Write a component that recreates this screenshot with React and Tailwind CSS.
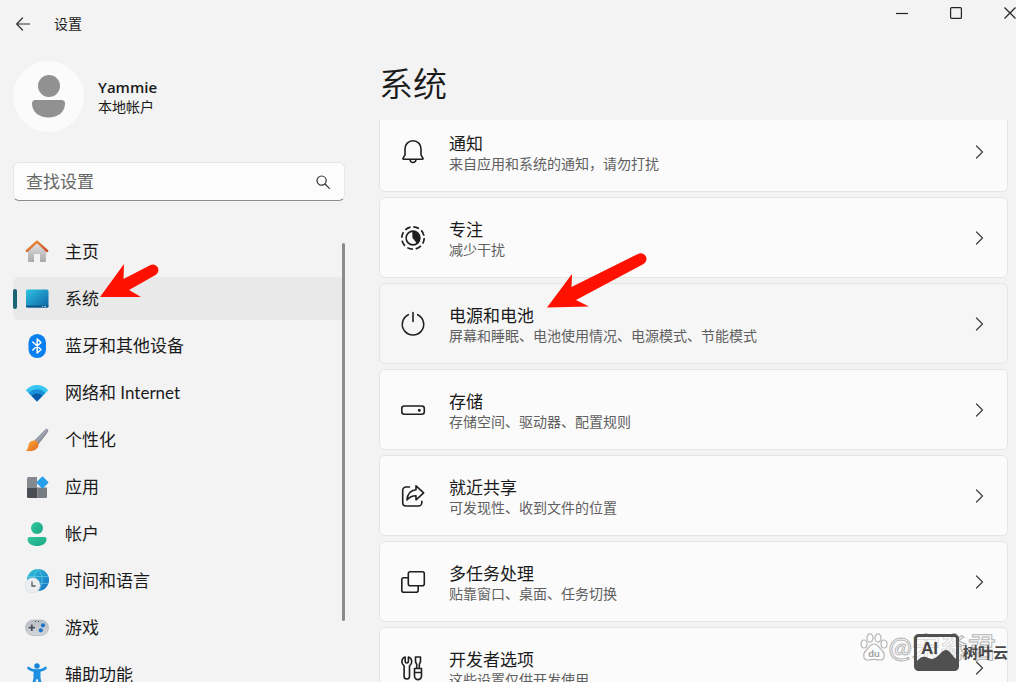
import { clsx } from "clsx";

const HomeIcon = () => (
  <svg viewBox="0 0 24 24" className="w-6 h-6">
    <defs>
      <linearGradient id="homeWall" x1="0" y1="0" x2="0" y2="1">
        <stop offset="0" stopColor="#e6e6e6" />
        <stop offset="1" stopColor="#a9a9ab" />
      </linearGradient>
      <linearGradient id="homeRoof" x1="0" y1="0" x2="1" y2="1">
        <stop offset="0" stopColor="#f0973c" />
        <stop offset="1" stopColor="#c4502a" />
      </linearGradient>
    </defs>
    <path d="M3 10.500 12 2l9 8.500V21a1 1 0 0 1-1 1h-5v-8H9v8H4a1 1 0 0 1-1-1z" fill="url(#homeWall)" />
    <path d="M1.800 11 12 1.700 22.200 11" fill="none" stroke="url(#homeRoof)" strokeWidth="2.400" strokeLinecap="round" strokeLinejoin="round" />
  </svg>
);

const SystemIcon = () => (
  <svg viewBox="0 0 24 24" className="w-6 h-6">
    <defs>
      <linearGradient id="screen" x1="0" y1="0" x2="1" y2="1">
        <stop offset="0" stopColor="#2fc3e2" />
        <stop offset="1" stopColor="#0c63a4" />
      </linearGradient>
    </defs>
    <rect x="1" y="2.500" width="22.500" height="18" rx="1.500" fill="url(#screen)" />
    <path d="M1 18.500h22.500v.5a1.500 1.500 0 0 1-1.500 1.500H2.500A1.500 1.500 0 0 1 1 19z" fill="#0b5688" />
    <path d="M17 19.500h1M19 19.500h2" stroke="#bfe6f5" strokeWidth="0.800" />
  </svg>
);

const BluetoothIcon = () => (
  <svg viewBox="0 0 24 24" className="w-6 h-6">
    <rect x="3.500" y="0" width="17.500" height="24" rx="8.700" fill="#0a7ff0" />
    <path d="M7.800 8 16 15.500 12.200 19V5L16 8.500 7.800 16" fill="none" stroke="#fff" strokeWidth="1.500" strokeLinejoin="round" strokeLinecap="round" />
  </svg>
);

const NetworkIcon = () => (
  <svg viewBox="0 0 24 24" className="w-6 h-6">
    <path d="M12 20.500.8 9.200C7 2.200 17 2.200 23.200 9.200z" fill="#35c5f0" />
    <path d="M12 20.500 3.700 12.100c4.700-5.200 11.900-5.200 16.600 0z" fill="#1990d8" />
    <path d="M12 20.500 6.700 15c3-3.200 7.600-3.200 10.600 0z" fill="#0c59a8" />
  </svg>
);

const BrushIcon = () => (
  <svg viewBox="0 0 24 24" className="w-6 h-6">
    <defs>
      <linearGradient id="bristle" x1="0" y1="0" x2="1" y2="1">
        <stop offset="0" stopColor="#fbb040" />
        <stop offset="1" stopColor="#e2661b" />
      </linearGradient>
    </defs>
    <path d="M9.500 12.500 20.500 1.200c1.200-1.200 3.300 0 2.700 1.700-.3 1-.6 1.500-1.200 2.300L13 17z" fill="#8b929d" />
    <path d="M11 14 22.300 1.500" stroke="#b5bac2" strokeWidth="1" />
    <path d="M9 12.500c2.500 0 4.700 2.200 4.500 4.700C13 21.500 7 24.500.8 22.500c2.200-1.300 2.200-3 2.700-5.500.5-2.800 2.700-4.500 5.500-4.500z" fill="url(#bristle)" />
  </svg>
);

const AppsIcon = () => (
  <svg viewBox="0 0 24 24" className="w-6 h-6">
    <path d="M3.500 2H12v10.500H2V3.500A1.500 1.500 0 0 1 3.500 2z" fill="#858a90" />
    <path d="M2 12.500h10.500V23h-9A1.500 1.500 0 0 1 2 21.500z" fill="#4a4e54" />
    <path d="M12.500 12.500H22v9a1.500 1.500 0 0 1-1.500 1.500h-8z" fill="#777c83" />
    <rect x="13" y="3" width="9" height="9" rx="1.200" transform="rotate(45 17.500 7.500)" fill="#26a0ea" />
  </svg>
);

const AccountIcon = () => (
  <svg viewBox="0 0 24 24" className="w-6 h-6">
    <defs>
      <linearGradient id="person" x1="0" y1="0" x2="1" y2="1">
        <stop offset="0" stopColor="#35c9a0" />
        <stop offset="1" stopColor="#17a582" />
      </linearGradient>
    </defs>
    <circle cx="12" cy="6" r="6" fill="url(#person)" />
    <path d="M4.500 15h15a2 2 0 0 1 2 2c0 4.500-4.500 7-9.500 7s-9.500-2.500-9.500-7a2 2 0 0 1 2-2z" fill="url(#person)" />
  </svg>
);

const TimeIcon = () => (
  <svg viewBox="0 0 24 24" className="w-6 h-6">
    <defs>
      <linearGradient id="globe" x1="0" y1="0" x2="1" y2="1">
        <stop offset="0" stopColor="#32c4d8" />
        <stop offset="1" stopColor="#136fc4" />
      </linearGradient>
    </defs>
    <circle cx="13" cy="11" r="11" fill="url(#globe)" />
    <path d="M3 7.500h20M3 14.500h20M13 0c-5.500 5-5.500 17 0 22M13 0c5.500 5 5.500 17 0 22" fill="none" stroke="#7bd7ec" strokeWidth="0.500" />
    <circle cx="7.700" cy="16.300" r="7.500" fill="#eceef0" stroke="#cfd3d6" strokeWidth="0.500" />
    <path d="M7 12.500V17h3.500" fill="none" stroke="#5a5f66" strokeWidth="1.300" />
  </svg>
);

const GamingIcon = () => (
  <svg viewBox="0 0 24 24" className="w-6 h-6">
    <defs>
      <linearGradient id="pad" x1="0" y1="0" x2="0" y2="1">
        <stop offset="0" stopColor="#b9bec5" />
        <stop offset="1" stopColor="#d3d6da" />
      </linearGradient>
    </defs>
    <rect x="0.500" y="4" width="23" height="15.500" rx="7.700" fill="url(#pad)" stroke="#a5abb3" strokeWidth="0.600" />
    <path d="M6.800 8.500v6.400M3.600 11.700H10" stroke="#4d535b" strokeWidth="1.700" />
    <path d="M10 5.500h1M13 5.500h1" stroke="#4d535b" strokeWidth="1.200" />
    <circle cx="18" cy="9.300" r="2.100" fill="#1c74cc" />
    <circle cx="15.800" cy="14.300" r="2.100" fill="#1c74cc" />
  </svg>
);

const AccessibilityIcon = () => (
  <svg viewBox="0 0 24 24" className="w-6 h-6">
    <circle cx="12" cy="3" r="2.700" fill="#1583d8" />
    <path d="M3.500 5C7 8.500 17 8.500 20.500 5" fill="none" stroke="#1e90e2" strokeWidth="2.600" strokeLinecap="round" />
    <path d="M8.500 7h7v8l1.800 7.500a1.300 1.300 0 0 1-2.500.6L12.500 16h-1l-2.300 7.100a1.300 1.300 0 0 1-2.500-.6L8.500 15z" fill="#1e90e2" />
  </svg>
);

const OutlineIcon = ({ children }) => (
  <svg viewBox="0 0 26 26" className="w-[26px] h-[26px] shrink-0" fill="none" stroke="#1f1f1f" strokeWidth="1.600" strokeLinecap="round" strokeLinejoin="round">
    {children}
  </svg>
);

const BellIcon = () => (
  <OutlineIcon>
    <path d="M13 1.800c-4.700 0-8 3.500-8 8v6L3 19.300c-.2.500 0 .9.500.9h19c.5 0 .7-.4.500-.9l-2-3.500v-6c0-4.500-3.300-8-8-8z" />
    <path d="M10 20.500c.2 1.900 1.300 3 3 3s2.800-1.100 3-3" />
  </OutlineIcon>
);

const FocusIcon = () => (
  <OutlineIcon>
    <circle cx="13" cy="13" r="11.200" strokeWidth="1.700" strokeDasharray="5.900 2.900" strokeLinecap="butt" />
    <circle cx="13" cy="13" r="6.900" />
    <path d="M13 6.500a6.500 6.500 0 0 1 4 11.600L13 13z" fill="#1f1f1f" strokeWidth="0.800" />
  </OutlineIcon>
);

const PowerIcon = () => (
  <OutlineIcon>
    <path d="M13 1.500v9M8.300 3.700a10.700 10.700 0 1 0 9.400 0" />
  </OutlineIcon>
);

const StorageIcon = () => (
  <OutlineIcon>
    <rect x="1.800" y="9" width="22.500" height="8.300" rx="2.500" />
    <circle cx="19.300" cy="13.200" r="0.700" fill="#1f1f1f" />
  </OutlineIcon>
);

const ShareIcon = () => (
  <OutlineIcon>
    <path d="M9.500 4H6a3.300 3.300 0 0 0-3.300 3.300v12.400A3.300 3.300 0 0 0 6 23h12.500a3.300 3.300 0 0 0 3.300-3.300v-1.500" />
    <path d="m16 2.800 7.700 7-7.700 7v-4c-4 0-6.500 1.200-9 4.200.4-5.500 3.500-9.600 9-10.200z" />
  </OutlineIcon>
);

const MultitaskIcon = () => (
  <OutlineIcon>
    <rect x="8.300" y="2.800" width="16" height="14" rx="2" />
    <path d="M8.300 8.800H3.800a2 2 0 0 0-2 2v10.400a2 2 0 0 0 2 2h12.400a2 2 0 0 0 2-2v-4.400" />
  </OutlineIcon>
);

const DeveloperIcon = () => (
  <OutlineIcon>
    <path d="M5.200 2c-2 .7-3.300 2.600-3.300 4.700 0 1.900.8 3.200 2.200 4.200v10.400c0 1.500 1.200 2.700 2.700 2.700s2.700-1.200 2.700-2.700V10.900c1.400-1 2.200-2.300 2.200-4.200 0-2.100-1.300-4-3.300-4.700v4.500c0 .9-.7 1.500-1.600 1.500s-1.600-.6-1.600-1.500z" />
    <path d="M14.500 13.500h7v7.600a3.500 3.500 0 0 1-7 0zM16.700 13.500V9.300l-1.200-2.600V2h5v4.700l-1.200 2.600v4.200M14.700 17.500h6.600" />
  </OutlineIcon>
);

const navItems = [
  { label: "主页", Icon: HomeIcon },
  { label: "系统", Icon: SystemIcon, active: true },
  { label: "蓝牙和其他设备", Icon: BluetoothIcon },
  { label: "网络和 Internet", Icon: NetworkIcon },
  { label: "个性化", Icon: BrushIcon },
  { label: "应用", Icon: AppsIcon },
  { label: "帐户", Icon: AccountIcon },
  { label: "时间和语言", Icon: TimeIcon },
  { label: "游戏", Icon: GamingIcon },
  { label: "辅助功能", Icon: AccessibilityIcon },
];

const settings = [
  { title: "通知", text: "来自应用和系统的通知，请勿打扰", Icon: BellIcon },
  { title: "专注", text: "减少干扰", Icon: FocusIcon },
  { title: "电源和电池", text: "屏幕和睡眠、电池使用情况、电源模式、节能模式", Icon: PowerIcon, hovered: true },
  { title: "存储", text: "存储空间、驱动器、配置规则", Icon: StorageIcon },
  { title: "就近共享", text: "可发现性、收到文件的位置", Icon: ShareIcon },
  { title: "多任务处理", text: "贴靠窗口、桌面、任务切换", Icon: MultitaskIcon },
  { title: "开发者选项", text: "这些设置仅供开发使用", Icon: DeveloperIcon },
];

const TitleBar = () => (
  <header className="flex items-start justify-between h-12 shrink-0">
    <div className="flex items-center h-12 pl-4">
      <button type="button" aria-label="返回">
        <svg viewBox="0 0 14 14" className="w-[14px] h-[14px]" fill="none" stroke="#333" strokeWidth="1.200" strokeLinecap="round" strokeLinejoin="round">
          <path d="M6.500 1 .7 7l5.800 6M.7 7h12.800" />
        </svg>
      </button>
      <span className="ml-6 text-sm">设置</span>
    </div>
    <div className="flex items-center h-[25px] gap-[42px]">
      <button type="button" aria-label="最小化">
        <svg viewBox="0 0 12 12" className="w-3 h-3" stroke="#222" strokeWidth="1.200">
          <path d="M0 6.500h12" />
        </svg>
      </button>
      <button type="button" aria-label="最大化">
        <svg viewBox="0 0 12 12" className="w-3 h-3" fill="none" stroke="#222" strokeWidth="1.200">
          <rect x="0.600" y="0.600" width="10.800" height="10.800" rx="1" />
        </svg>
      </button>
      <button type="button" aria-label="关闭">
        <svg viewBox="0 0 12 12" className="w-3 h-3" stroke="#222" strokeWidth="1.200">
          <path d="m.5.5 11 11M11.500.5l-11 11" />
        </svg>
      </button>
    </div>
  </header>
);

const Profile = () => (
  <div className="flex items-center gap-[14px] mt-[13px]">
    <div className="w-[71px] h-[71px] rounded-full bg-[#fbfbfb] shrink-0">
      <svg viewBox="0 0 71 71" className="w-full h-full" fill="#919191">
        <circle cx="36" cy="25" r="11" />
        <path d="M22.500 39h26a3.500 3.500 0 0 1 3.500 3.500C52 51 45 56.500 35.500 56.500S19 51 19 42.500a3.500 3.500 0 0 1 3.500-3.500z" />
      </svg>
    </div>
    <div>
      <p className="font-['Open_Sans',sans-serif] text-[15px] leading-5 font-semibold">Yammie</p>
      <p className="text-sm leading-5">本地帐户</p>
    </div>
  </div>
);

const SearchBox = () => (
  <div className="flex items-center h-[39px] mt-[30px] px-3 rounded-md bg-[#fcfcfc] border border-[#e6e6e6] border-b-[#8c8c8c]">
    <input
      type="text"
      aria-label="查找设置"
      placeholder="查找设置"
      className="flex-1 min-w-0 bg-transparent outline-none text-[17px] placeholder:text-[#666666]"
    />
    <svg viewBox="0 0 14 14" className="w-[14px] h-[14px] mr-[2px]" fill="none" stroke="#333" strokeWidth="1.200" strokeLinecap="round">
      <circle cx="5.600" cy="5.600" r="4.600" />
      <path d="m9 9 4.400 4.400" />
    </svg>
  </div>
);

const Sidebar = () => (
  <aside className="flex flex-col w-[345px] shrink-0 min-h-0 pl-[13px]">
    <Profile />
    <SearchBox />
    <nav className="relative flex-1 min-h-0 mt-7 overflow-hidden">
      <ul className="flex flex-col gap-1 pt-px">
        {navItems.map(({ label, Icon, active }) => (
          <li key={label}>
            <a
              href="#"
              className={clsx("relative flex items-center gap-4 h-[43px] pl-3 rounded-md text-[17px]", active && "bg-[#e9e9e9]")}
            >
              {active && <span className="absolute left-0 w-1 h-5 rounded-full bg-[#1b6474]" />}
              <Icon />
              <span>{label}</span>
            </a>
          </li>
        ))}
      </ul>
      {/* Scrollbar */}
      <div className="absolute right-0 top-[14px] bottom-[61px] w-[3px] rounded-full bg-[#8b8b8b]" />
    </nav>
  </aside>
);

const SettingCard = ({ title, text, Icon, hovered }) => (
  <li>
    <a
      href="#"
      className={clsx(
        "flex items-center h-[81px] px-5 rounded-md border border-[#e5e5e5]",
        hovered ? "bg-[#f6f6f6]" : "bg-[#fbfbfb]"
      )}
    >
      <Icon />
      <div className="flex-1 min-w-0 pt-1 ml-[23px]">
        <p className="text-[17px] leading-5">{title}</p>
        <p className="text-sm leading-5 text-[#606060] truncate">{text}</p>
      </div>
      <svg viewBox="0 0 14 14" className="w-[14px] h-[14px]" fill="none" stroke="#444" strokeWidth="1.300" strokeLinecap="round" strokeLinejoin="round">
        <path d="m3.500 1 6 6-6 6" />
      </svg>
    </a>
  </li>
);

const Arrows = () => (
  <>
    <svg viewBox="0 0 60 36" className="absolute left-[100px] top-[263px] w-[60px] h-9 pointer-events-none" fill="#fe1100">
      <path d="M0 34 24 1l-.5 15L50 2.200a5.600 5.600 0 0 1 5.500 9.800L29 27l12 7z" />
    </svg>
    <svg viewBox="0 0 100 56" className="absolute left-[547px] top-[253px] w-[100px] h-14 pointer-events-none" fill="#fe1100">
      <path d="M0 54.500 25 21l-.5 13L91 .9a5.700 5.700 0 0 1 5.500 10L29 47l13 6.500z" />
    </svg>
  </>
);

const Watermark = () => (
  <div className="absolute right-2 bottom-2 flex items-center h-[43px] pr-3 pointer-events-none">
    <svg viewBox="0 0 28 28" className="w-7 h-7 -mt-3 mr-px">
      <g fill="#fdfdfd" stroke="#b5b5b5" strokeWidth="1.200">
        <ellipse cx="4" cy="11" rx="3" ry="4" />
        <ellipse cx="10" cy="5" rx="3" ry="4.200" />
        <ellipse cx="18" cy="5" rx="3" ry="4.200" />
        <ellipse cx="24" cy="11" rx="3" ry="4" />
        <path d="M14 11c4 0 5 3.500 8 6.500 3.500 3.500 3 9.500-2 9.500-3 0-4-.6-6-.6s-3 .6-6 .6c-5 0-5.500-6-2-9.500 3-3 4-6.500 8-6.500z" />
      </g>
      <text x="14" y="24" textAnchor="middle" fontSize="10" fontWeight="700" fill="#9a9a9a">du</text>
    </svg>
    <span className="-mt-3 text-[28px] leading-9 font-medium text-[#fdfdfd] [-webkit-text-stroke:1px_#b5b5b5]">@宋淼君</span>
    {/* Logo laid over the handle */}
    <div className="absolute right-0 bottom-0 flex items-center gap-1 h-[43px]">
      <svg viewBox="0 0 45 37" className="w-[45px] h-[37px]">
        <rect x="1.500" y="1.500" width="42" height="34" rx="3" fill="#ffffff" fillOpacity="0.500" stroke="#505050" strokeWidth="3" />
        <path d="M3 27c3-4 6-5 9-4 4 1.500 6 3 10 .5 4-3 6-7 10-7.500 4 0 6 6 10 9v10H3z" fill="#505050" />
        <text x="7" y="20" fontSize="17" fontWeight="700" fill="#454545" fontFamily="Liberation Sans">AI</text>
      </svg>
      <span className="text-[15px] font-bold text-[#484848]">树叶云</span>
    </div>
  </div>
);

export default function App() {
  return (
    <div className="relative flex flex-col h-screen overflow-hidden bg-[#f3f3f3] text-[#1a1a1a] font-[Lato,'Noto_Sans_CJK_SC',sans-serif]">
      <TitleBar />
      <div className="flex flex-1 min-h-0">
        <Sidebar />
        <main className="flex flex-col flex-1 min-w-0 pl-[34px] pr-2">
          <h1 className="mt-3 text-[34px] leading-[48px] font-[350]">系统</h1>
          <div className="flex-1 min-h-0 mt-3 overflow-hidden">
            <ul className="flex flex-col gap-[5px] -mt-[9px]">
              {settings.map((item) => (
                <SettingCard key={item.title} {...item} />
              ))}
            </ul>
          </div>
        </main>
      </div>
      <Arrows />
      <Watermark />
    </div>
  );
}
